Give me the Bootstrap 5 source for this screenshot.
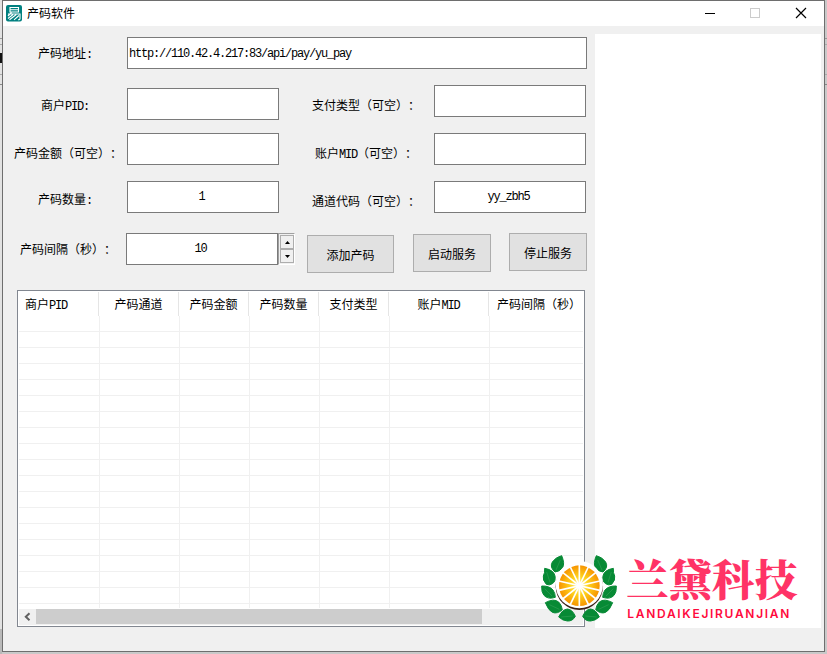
<!DOCTYPE html>
<html lang="zh-CN">
<head>
<meta charset="utf-8">
<title>产码软件</title>
<link href="https://cdn.jsdelivr.net/npm/bootstrap@5.3.0/dist/css/bootstrap.min.css" rel="stylesheet">
<style>
body{width:827px;height:654px;overflow:hidden;font:12px/16px "Noto Sans CJK SC","Liberation Sans",sans-serif;color:#000;text-spacing-trim:space-all;
 background:linear-gradient(#999,#999) 0 38px/100% 1px no-repeat,linear-gradient(#aaa,#aaa) 0 44px/100% 1px no-repeat,linear-gradient(#111,#111) 0 53px/2px 10px no-repeat,linear-gradient(#aaa,#aaa) 0 74px/100% 1px no-repeat,linear-gradient(#888,#888) 0 84px/100% 1px no-repeat,linear-gradient(#b9b9b9,#b9b9b9) 0 629px/2px 25px no-repeat,linear-gradient(#c9c9c9,#c9c9c9) 0 652px/100% 2px no-repeat,linear-gradient(90deg,#e2e2e2 50%,#c9c9c9 50%)}
.win{width:823px;height:652px;margin-left:2px;border:1px solid #6e6e6e;background:#f0f0f0}
.titlebar{height:25px;background:#fff}
.app-icon{margin:4px 5px 0 3px}
.caption-text{padding-top:4px}
.left-pane{width:592px;padding-top:11px}
.preview{width:226px;height:594px;margin-top:8px;background:#fff}
.r48{height:48px}.r52{height:52px}.r57{height:57px}
.lbl{width:124px;height:32px;line-height:31px;white-space:nowrap;flex:none}
.lbl2{width:155px}.lbl3{width:123px}
.n1{padding-left:35px}.n2{padding-left:38px}.n3{padding-left:11px}.n4{padding-left:17px}
.m1{padding-left:33px}.m2{padding-left:36px}
.d2{padding-top:2px}.d4{padding-top:4px}
.field{width:152px;height:32px;border:1px solid #7a7a7a;background:#fff;color:#000;font:12px/30px "Liberation Mono",monospace;letter-spacing:-1.2px;text-align:center;flex:none;padding-right:3px}
.field.wide{width:460px;text-align:left;padding:1px 0 0 1px}
.field.low{margin-top:3px}
.lat{font:12px/1 "Liberation Mono",monospace;letter-spacing:-1.2px}
.btn.cmd{--bs-btn-padding-x:0;--bs-btn-padding-y:0;--bs-btn-border-radius:0;--bs-btn-font-size:12px;--bs-btn-color:#000;--bs-btn-bg:#e1e1e1;--bs-btn-border-color:#adadad;width:78px;height:38px;line-height:38px;flex:none}
.btn.cmd.first{width:87px;margin:2px 19px 0 12px}
.btn.cmd.second{margin:1px 18px 0 0}
.spin{width:17px;height:32px;border:1px solid #fff;border-top-color:#a0a0a0;border-left-color:#a0a0a0;padding:1px}
.spin span{height:14px;width:14px;border:1px solid #adadad;background:#f0f0f0}
.grid-box{width:568px;height:337px;margin-left:14px;border:1px solid #828790;background:#fff;padding:1px}
.g-head{height:24px}
.g-head div{border-right:1px solid #e5e5e5;text-align:center;line-height:23px;white-space:nowrap;flex:none}
.g-head .head-first{padding-left:6px;text-align:left}
.g-head .head-last{width:94px;padding-left:8px;text-align:left;border:0}
.g-body{height:292px;background:repeating-linear-gradient(#fff 0 15px,#f0f0f0 15px 16px)}
.g-body div{border-right:1px solid #f0f0f0;flex:none}
.w70{width:70px}.w80{width:80px}.w81{width:81px}.w100{width:100px}
.hbar{height:16px;margin-top:1px;background:#f0f0f0}
.hbar .thumb{width:446px;height:15px;background:#cdcdcd}
.brand{left:530px;top:540px}
</style>
<script src="https://cdn.jsdelivr.net/npm/bootstrap@5.3.0/dist/js/bootstrap.bundle.min.js"></script>
</head>
<body class="position-relative">
<div class="win">
 <header class="titlebar d-flex">
  <svg class="app-icon" width="16" height="17" viewBox="0 0 16 17"><rect width="16" height="16.5" rx="2" fill="#008080"/><path d="M4 2.5h8.5v4.5H4zM4 4.8h8.5M2 9h12v4.5q0 1.5-2 1.3M5.5 7.5L2 11M7 9.5L2 13.5M10.3 9.5L3.5 14.8M13 10.5L8 14.8" fill="none" stroke="#fff" stroke-width="1.1"/></svg>
  <span class="caption-text">产码软件</span>
  <svg class="ms-auto" width="135" height="25" viewBox="689 1 135 25"><path d="M705 13.5h10" stroke="#000"/><rect x="750.5" y="8.5" width="9" height="9" fill="none" stroke="#ccc"/><path d="M796 8l10 10M806 8l-10 10" stroke="#000" stroke-width="1.2"/></svg>
 </header>
 <main class="d-flex align-items-start">
  <section class="left-pane">
   <div class="d-flex r48"><label class="lbl n1">产码地址<b class="lat">:</b></label><div class="field wide">http://110.42.4.217:83/api/pay/yu_pay</div></div>
   <div class="d-flex r48"><label class="lbl n2 d4">商户<span class="lat">PID</span><b class="lat">:</b></label><div class="field low"></div><label class="lbl lbl2 m1 d4">支付类型（可空）：</label><div class="field"></div></div>
   <div class="d-flex r48"><label class="lbl n3 d4">产码金额（可空）：</label><div class="field"></div><label class="lbl lbl2 m2 d4">账户<span class="lat">MID</span>（可空）：</label><div class="field"></div></div>
   <div class="d-flex r52"><label class="lbl n1 d2">产码数量<b class="lat">:</b></label><div class="field">1</div><label class="lbl lbl2 m1 d4">通道代码（可空）：</label><div class="field">yy_zbh5</div></div>
   <div class="d-flex r57 align-items-start"><label class="lbl lbl3 n4">产码间隔（秒）：</label><div class="field">10</div>
    <div class="spin"><span class="d-flex align-items-center justify-content-center"><svg width="5" height="3"><path d="M0 3L2.5 0 5 3z"/></svg></span><span class="d-flex align-items-center justify-content-center"><svg width="5" height="3"><path d="M0 0L2.5 3 5 0z"/></svg></span></div>
    <button class="btn cmd first">添加产码</button><button class="btn cmd second">启动服务</button><button class="btn cmd">停止服务</button></div>
   <div class="grid-box">
    <div class="g-head d-flex"><div class="w80 head-first">商户<span class="lat">PID</span></div><div class="w80">产码通道</div><div class="w70">产码金额</div><div class="w70">产码数量</div><div class="w70">支付类型</div><div class="w100">账户<span class="lat">MID</span></div><div class="head-last">产码间隔（秒）</div></div>
    <div class="g-body d-flex"><div class="w81"></div><div class="w80"></div><div class="w70"></div><div class="w70"></div><div class="w70"></div><div class="w100"></div></div>
    <div class="hbar d-flex"><svg width="17" height="16"><path d="M10.5 4.2L6.8 7.7l3.7 3.5" fill="none" stroke="#606060" stroke-width="2"/></svg><div class="thumb"></div></div>
   </div>
  </section>
  <aside class="preview"></aside>
 </main>
</div>
<svg class="brand position-absolute" width="290" height="100" viewBox="0 0 870 300">
 <defs>
  <radialGradient id="juice" gradientUnits="userSpaceOnUse" cx="148" cy="137" r="61"><stop offset=".15" stop-color="#ffee70"/><stop offset=".45" stop-color="#ffd21c"/><stop offset="1" stop-color="#f79400"/></radialGradient>
  <g id="leaves"><g fill="#078a35" stroke="#078a35" stroke-width="3" stroke-linejoin="round"><path d="M95 47Q105 70 98 83Q88 95 75 96Q58 82 67 66Q76 52 95 47z"/><path d="M44 85Q72 90 75 108Q78 124 67 131Q58 137 49 133Q37 120 40 108Q45 99 44 85z"/><path d="M35 138Q58 137 69 150Q76 160 76 172Q53 179 42 166Q34 157 35 138z"/><path d="M46 188Q71 174 86 186Q95 195 97 209Q82 223 67 217Q55 211 46 188z"/><path d="M86 231Q96 209 112 207Q127 208 136 229Q128 244 112 243Q98 242 86 231z"/></g>
  <path d="M91 60L78 90M50 96L60 127M44 146L66 168M58 194L88 208M94 231L128 228" stroke="#3fa45f" stroke-width="1.5" fill="none"/></g>
 </defs>
 <use href="#leaves"/><use href="#leaves" transform="translate(294 0) scale(-1 1)"/>
 <circle cx="148" cy="139" r="71" fill="#3b2017"/>
 <circle cx="148" cy="134" r="71" fill="#fff"/>
 <circle cx="148" cy="137" r="61" fill="url(#juice)"/>
 <g stroke="#fff" stroke-width="5"><path id="cut" d="M148 74V200"/><use href="#cut" transform="rotate(25.7 148 137)"/><use href="#cut" transform="rotate(51.4 148 137)"/><use href="#cut" transform="rotate(77.1 148 137)"/><use href="#cut" transform="rotate(102.8 148 137)"/><use href="#cut" transform="rotate(128.5 148 137)"/><use href="#cut" transform="rotate(154.2 148 137)"/></g>
 <text x="288" y="167" font-family="'Noto Serif CJK SC','Noto Sans CJK SC',sans-serif" font-weight="900" font-size="128" textLength="514" fill="#ff3366">兰黛科技</text>
 <text x="292" y="234" font-family="Inter,sans-serif" font-weight="600" font-size="36" textLength="486" fill="#ff0a3c">LANDAIKEJIRUANJIAN</text>
</svg>
</body>
</html>
